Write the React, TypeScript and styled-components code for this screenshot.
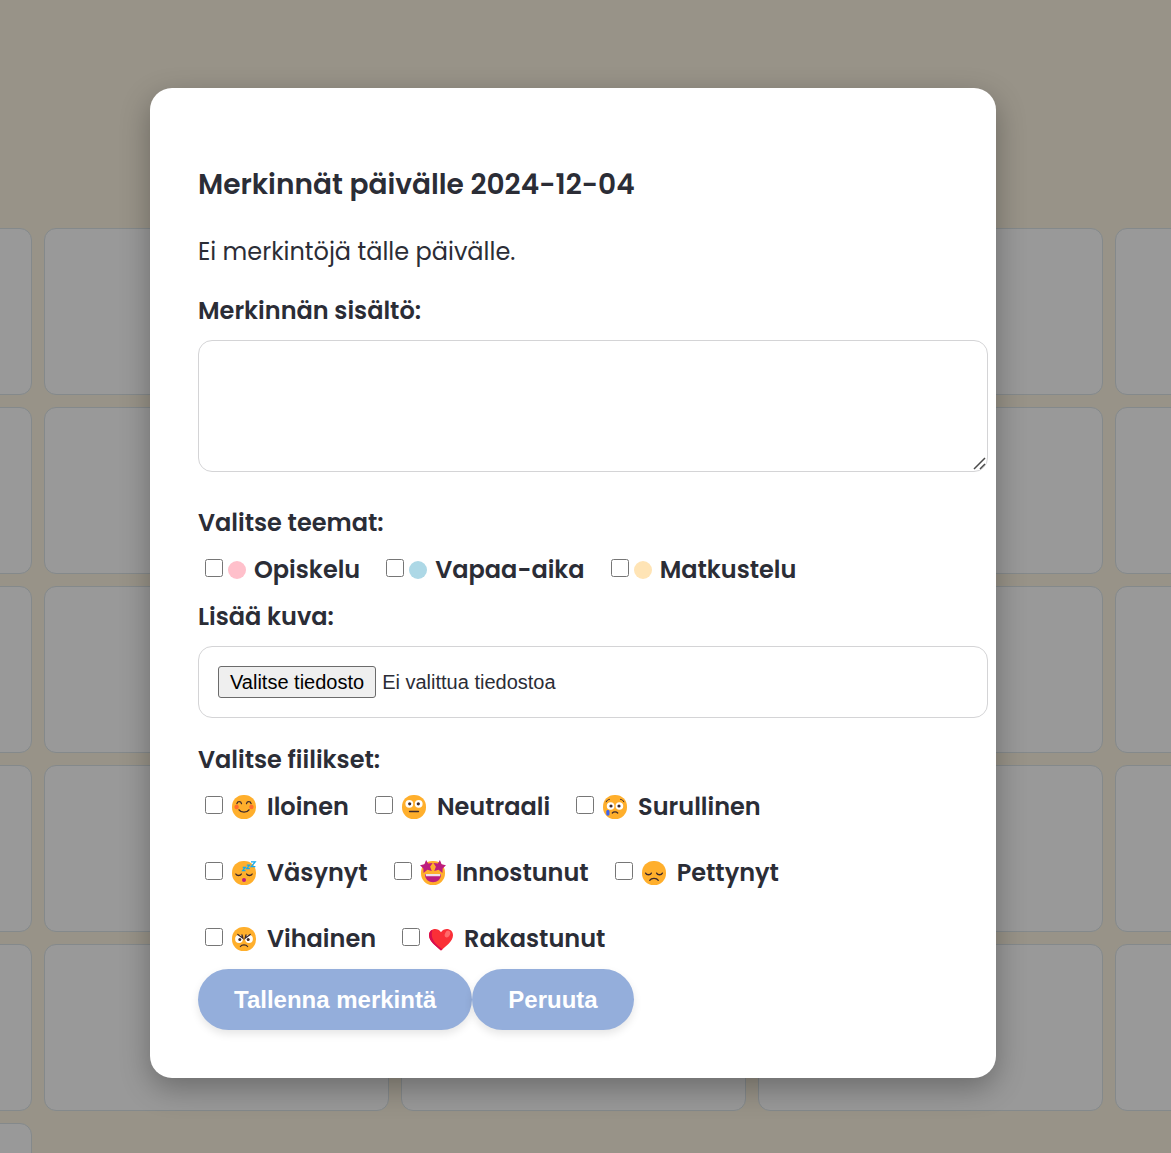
import React, { useRef, useState } from "react";
import styled, { createGlobalStyle } from "styled-components";

const GlobalStyle = createGlobalStyle`
  body {
    margin: 0;
    background: #fdf6e3;
    color: #2b2d36;
    font-family: Poppins, Inter, "Noto Sans", sans-serif;
    font-size: 24px;
    line-height: 36px;
    overflow: hidden;
  }
`;

const Page = styled.div`
  position: relative;
  height: 100vh;
  overflow: hidden;
`;

const Calendar = styled.div`
  display: grid;
  grid-template-columns: repeat(7, 345px);
  grid-auto-rows: 167px;
  gap: 12px;
  justify-content: center;
  padding: 228px 25px 0 0;
`;

const Day = styled.div`
  box-sizing: border-box;
  background: #fff;
  border: 1px solid #dce4e8;
  border-radius: 12px;
`;

const Overlay = styled.div`
  position: absolute;
  inset: 0;
  display: flex;
  justify-content: center;
  align-items: flex-start;
  box-sizing: border-box;
  padding: 88px 25px 0 0;
  background: rgba(0, 0, 0, 0.4);
`;

const Modal = styled.form`
  box-sizing: border-box;
  width: 100%;
  max-width: 846px;
  padding: 75px 48px 48px;
  background: #fff;
  border-radius: 22px;
  box-shadow: 0 10px 30px rgba(0, 0, 0, 0.3);
`;

const Title = styled.h3`
  margin: 0 0 27px;
  font-size: 28px;
  line-height: 44px;
  font-weight: 600;
`;

const Empty = styled.p`
  margin: 0 0 23px;
`;

const FieldLabel = styled.label`
  display: block;
  margin-bottom: 11px;
  font-weight: 600;
`;

const Group = styled.fieldset`
  margin: 0;
  padding: 0;
  border: 0;
  min-width: 0;
`;

const Legend = styled.legend`
  padding: 0;
  margin-bottom: 11px;
  font-weight: 600;
`;

const ContentBox = styled.div`
  position: relative;
  width: calc(100% + 40px);
  margin-bottom: 33px;
`;

const Content = styled.textarea`
  display: block;
  box-sizing: border-box;
  width: 100%;
  height: 132px;
  padding: 19px;
  border: 1px solid #d4d4d6;
  border-radius: 14px;
  font: inherit;
  color: inherit;

  &::-webkit-resizer {
    background: transparent;
  }
`;

const Grip = styled.svg`
  position: absolute;
  right: 2px;
  bottom: 2px;
  width: 13px;
  height: 13px;
  pointer-events: none;
`;

const Options = styled.div<{ $bottom: number }>`
  display: flex;
  flex-wrap: wrap;
  gap: 30px 26px;
  padding: 0 7px;
  margin-bottom: ${(p) => p.$bottom}px;
`;

const Option = styled.label<{ $gap: number }>`
  display: flex;
  align-items: center;
  gap: ${(p) => p.$gap}px;
  font-weight: 600;
`;

const Tick = styled.input`
  width: 18px;
  height: 18px;
  margin: 0 0 4px;
`;

const Mark = styled.span<{ $gap: number }>`
  display: flex;
  align-items: center;
  gap: ${(p) => p.$gap}px;
`;

const Dot = styled.span<{ $color: string }>`
  width: 18px;
  height: 18px;
  border-radius: 50%;
  background: ${(p) => p.$color};
`;

const FileBox = styled.div`
  display: flex;
  align-items: center;
  gap: 6px;
  width: 100%;
  height: 32px;
  margin-bottom: 24px;
  padding: 19px;
  border: 1px solid #d4d4d6;
  border-radius: 14px;
  font-family: "Liberation Sans", Arial, sans-serif;
  font-size: 20px;
`;

const FileButton = styled.button`
  height: 32px;
  padding: 0 11px;
  border: 1px solid #6b6b6b;
  border-radius: 3px;
  background: #efefef;
  color: #000;
  font: inherit;
  line-height: 28px;
`;

const Actions = styled.div`
  display: flex;
`;

const Action = styled.button`
  height: 61px;
  padding: 0 36px;
  border: 0;
  border-radius: 31px;
  background: #94aedb;
  color: #fff;
  font-family: "Liberation Sans", Arial, sans-serif;
  font-size: 24px;
  font-weight: 700;
  box-shadow: 0 4px 8px rgba(0, 0, 0, 0.1);
`;

const Face = styled.svg`
  width: 26px;
  height: 26px;
  flex: none;
`;

type Mood = "happy" | "neutral" | "sad" | "tired" | "excited" | "let-down" | "angry" | "love";

const ink = { fill: "none", stroke: "#3f2a2b", strokeWidth: 1.3, strokeLinecap: "round" as const };

const OpenEyes = () => (
  <>
    <circle cx="8.3" cy="9.8" r="3.9" fill="#fff" />
    <circle cx="17.7" cy="9.8" r="3.9" fill="#fff" />
    <circle cx="8.7" cy="9.8" r="1.6" fill="#3f2a2b" />
    <circle cx="17.3" cy="9.8" r="1.6" fill="#3f2a2b" />
  </>
);

const features: Record<Exclude<Mood, "love">, React.ReactNode> = {
  happy: (
    <>
      <circle cx="5.6" cy="13" r="2.2" fill="#ff6d2e" />
      <circle cx="20.4" cy="13" r="2.2" fill="#ff6d2e" />
      <path {...ink} d="M5.9 9.600c.6-2.600 4-2.600 4.600 0M15.500 9.600c.6-2.600 4-2.600 4.600 0M8 15.800c2.200 3.200 7.800 3.200 10 0" />
    </>
  ),
  neutral: (
    <>
      <OpenEyes />
      <path {...ink} d="M8.5 17.5h9" />
    </>
  ),
  sad: (
    <>
      <circle cx="8.6" cy="12" r="3.800" fill="#fff" />
      <circle cx="17.400" cy="12" r="3.800" fill="#fff" />
      <circle cx="9" cy="12" r="1.600" fill="#3f2a2b" />
      <circle cx="17" cy="12" r="1.600" fill="#3f2a2b" />
      <path {...ink} strokeWidth={1} d="M4.200 7.800c.6-1.500 1.700-2.200 3.200-2.400M21.800 7.800c-.6-1.500-1.700-2.200-3.200-2.400" />
      <path {...ink} d="M10.300 19c1.400-1.400 4-1.400 5.400 0" />
      <path d="M4.300 17.500c0-2 3.200-2 3.200 0v2.800c0 1.800-3.200 1.800-3.200 0z" fill="#3d63ee" />
    </>
  ),
  tired: (
    <>
      <path {...ink} d="M4.8 14c1.1 2 4.5 2 5.6 0M15.6 14c1.1 2 4.5 2 5.6 0" />
      <circle cx="13" cy="20" r="2" fill="#bd1d7e" />
      <path
        d="M11.700 7.500h2.600l-2.600 3.200h2.800M15.800 5.200h2.800l-2.800 3.400h3M20 1.900h4.200l-4 4.800h4.200"
        fill="none"
        stroke="#12a9ee"
        strokeWidth="1.3"
      />
    </>
  ),
  excited: (
    <>
      <path
        d="m6.1 0 2 3.5 4.5-.5-2.5 3.7 1.7 4.3-4.4-1.3L3.6 13l-.3-4.6L0 5.2l4.4-1zM19.9 0l-2 3.5-4.5-.5 2.5 3.7-1.7 4.3 4.4-1.3 3.8 3.3.3-4.6L26 5.2l-4.4-1z"
        fill="#bd1d7e"
      />
      <path d="M5 14h16c.4 11-16.4 11-16 0z" fill="#bd1d7e" />
      <path d="M5.500 14h15l-.5 2.200H6z" fill="#eee2ec" />
    </>
  ),
  "let-down": (
    <path
      {...ink}
      d="M4.6 13.1c1.1 2.2 4.7 2.2 5.8 0M15.6 13.1c1.1 2.2 4.7 2.2 5.8 0M8.7 20.3c1.7-2.6 6.9-2.6 8.6 0"
    />
  ),
  angry: (
    <>
      <circle cx="8" cy="13" r="3.9" fill="#fff" />
      <circle cx="18" cy="13" r="3.9" fill="#fff" />
      <circle cx="8.8" cy="13.6" r="1.5" fill="#3f2a2b" />
      <circle cx="17.2" cy="13.6" r="1.5" fill="#3f2a2b" />
      <path {...ink} d="m6.8 8.4 5 3.8-.8-3.2M19.2 8.4l-5 3.8.8-3.2M9.4 20.500c1.500-2.200 5.700-2.200 7.200 0" />
    </>
  ),
};

const Emoji = ({ mood }: { mood: Mood }) =>
  mood === "love" ? (
    <Face viewBox="0 0 26 26" aria-hidden="true">
      <path d="M13 24.5C8.6 20.5 1 15.500 1 9.300 1 2.500 9.500 1 13 6.200c3.500-5.200 12-3.700 12 3.100 0 6.200-7.600 11.200-12 15.200z" fill="#fa2f37" />
      <path d="M13 24.500C8.600 20.500 1 15.500 1 9.300c0-2.800 1.500-4.700 3.400-5.500C1.500 13.500 8.500 19 14.500 23.200z" fill="#d80c4f" />
      <ellipse cx="19.500" cy="8" rx="2.500" ry="3.600" fill="#ff6b6b" transform="rotate(25 19.500 8)" />
    </Face>
  ) : (
    <Face viewBox="0 0 26 26" aria-hidden="true">
      <rect x="1" y="1" width="24" height="24" rx="11.500" fill="#ffaf2c" />
      {features[mood]}
    </Face>
  );

const themes = [
  { name: "Opiskelu", color: "#ffc0cb" },
  { name: "Vapaa-aika", color: "#add8e6" },
  { name: "Matkustelu", color: "#ffe4b5" },
];

const feelings: { name: string; mood: Mood }[] = [
  { name: "Iloinen", mood: "happy" },
  { name: "Neutraali", mood: "neutral" },
  { name: "Surullinen", mood: "sad" },
  { name: "Väsynyt", mood: "tired" },
  { name: "Innostunut", mood: "excited" },
  { name: "Pettynyt", mood: "let-down" },
  { name: "Vihainen", mood: "angry" },
  { name: "Rakastunut", mood: "love" },
];

export default function App() {
  const picker = useRef<HTMLInputElement>(null);
  const [fileName, setFileName] = useState("");

  return (
    <>
      <GlobalStyle />
      <Page>
        <Calendar>
          {Array.from({ length: 37 }, (_, i) => (
            <Day key={i} />
          ))}
        </Calendar>
        <Overlay>
          <Modal role="dialog" aria-labelledby="title" onSubmit={(e) => e.preventDefault()}>
            <Title id="title">Merkinnät päivälle 2024-12-04</Title>
            <Empty>Ei merkintöjä tälle päivälle.</Empty>

            <FieldLabel htmlFor="content">Merkinnän sisältö:</FieldLabel>
            <ContentBox>
              <Content id="content" />
              <Grip viewBox="0 0 13 13" aria-hidden="true">
                <path d="M1 12 12 1M7 12l5-5" fill="none" stroke="#4a4a4a" strokeWidth="1.500" />
              </Grip>
            </ContentBox>

            <Group>
              <Legend>Valitse teemat:</Legend>
              <Options $bottom={11}>
                {themes.map((t) => (
                  <Option key={t.name} $gap={5}>
                    <Tick type="checkbox" name="theme" value={t.name} />
                    <Mark $gap={8}>
                      <Dot $color={t.color} />
                      {t.name}
                    </Mark>
                  </Option>
                ))}
              </Options>
            </Group>

            <FieldLabel htmlFor="picture">Lisää kuva:</FieldLabel>
            <FileBox>
              <input
                ref={picker}
                id="picture"
                type="file"
                hidden
                onChange={(e) => setFileName(e.target.files?.[0]?.name ?? "")}
              />
              <FileButton type="button" onClick={() => picker.current?.click()}>
                Valitse tiedosto
              </FileButton>
              <span>{fileName || "Ei valittua tiedostoa"}</span>
            </FileBox>

            <Group>
              <Legend>Valitse fiilikset:</Legend>
              <Options $bottom={12}>
                {feelings.map((f) => (
                  <Option key={f.name} $gap={8}>
                    <Tick type="checkbox" name="feeling" value={f.name} />
                    <Mark $gap={10}>
                      <Emoji mood={f.mood} />
                      {f.name}
                    </Mark>
                  </Option>
                ))}
              </Options>
            </Group>

            <Actions>
              <Action type="submit">Tallenna merkintä</Action>
              <Action type="button">Peruuta</Action>
            </Actions>
          </Modal>
        </Overlay>
      </Page>
    </>
  );
}
